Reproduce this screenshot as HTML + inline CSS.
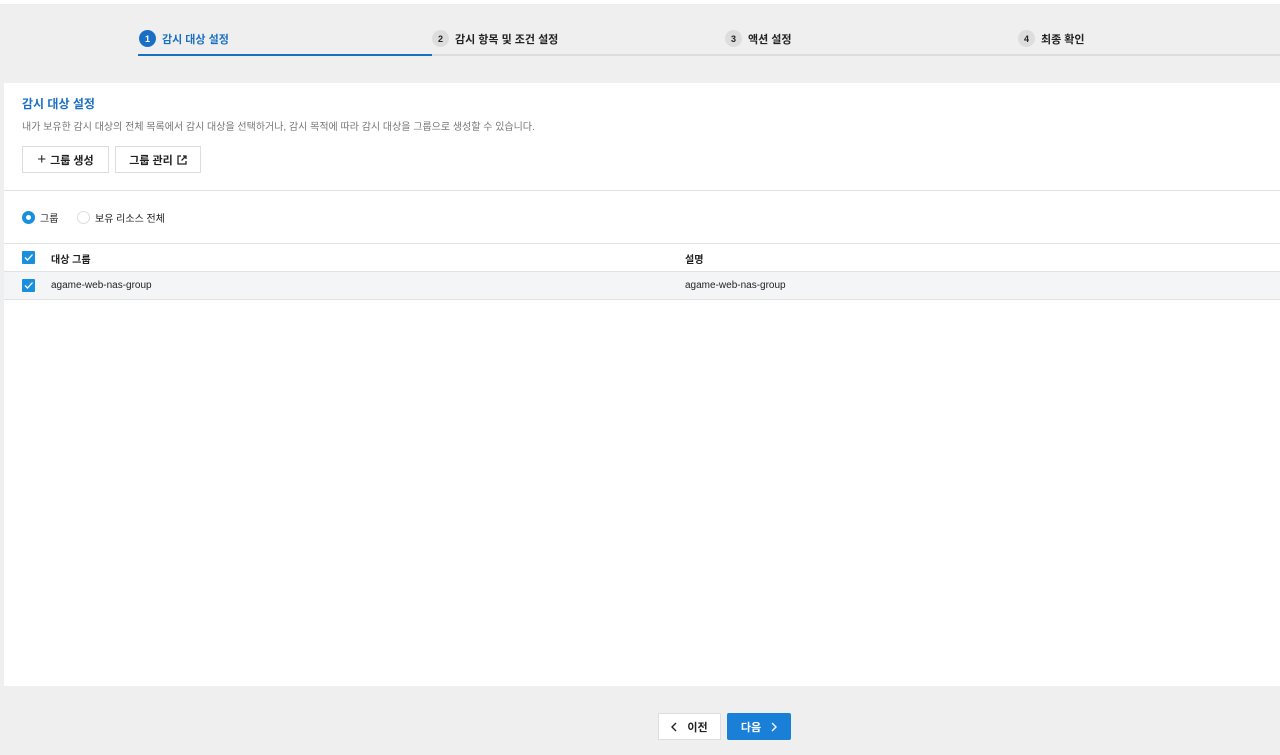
<!DOCTYPE html>
<html><head><meta charset="utf-8"><style>
*{margin:0;padding:0;box-sizing:border-box}
body{width:1280px;height:755px;background:#efefef;font-family:"Liberation Sans","Noto Sans CJK KR",sans-serif;position:relative;overflow:hidden;color:#222}
.top{position:absolute;left:0;top:0;width:1280px;height:4px;background:#fff}
.line{position:absolute;left:138px;top:54px;width:1142px;height:2px;background:#dcdcdc}
.blue{position:absolute;left:138px;top:54px;width:294px;height:2px;background:#1a6fc4}
.step{position:absolute;top:30px;font-size:11px;font-weight:bold;display:flex;align-items:center;gap:6px}
.num{width:17px;height:17px;border-radius:50%;background:#ddd;font-size:9px;display:flex;align-items:center;justify-content:center;color:#222}
.panel{position:absolute;left:4px;top:83px;width:1276px;height:603px;background:#fff}
h2{position:absolute;left:18px;top:12px;font-size:12px;color:#1a6fc4;font-weight:bold}
.desc{position:absolute;left:18px;top:35px;font-size:10px;color:#777}
.btn{position:absolute;top:63px;height:27px;border:1px solid #ddd;background:#fff;font-size:11px;font-weight:bold;display:flex;align-items:center;justify-content:center}
.hr{position:absolute;left:0;width:1276px;height:1px;background:#e2e2e2}
.radio{position:absolute;top:127px;font-size:10px;display:flex;align-items:center;gap:5px}
.cb{position:absolute;left:18px;width:13px;height:13px;background:#1a8fdd;border-radius:1px}
.row{position:absolute;left:0;width:1276px;font-size:10px}
</style></head><body>
<div class="top"></div>
<div class="line"></div><div class="blue"></div>
<div class="step" style="left:139px;color:#1a6fc4"><span class="num" style="background:#1a6fc4;color:#fff">1</span>감시 대상 설정</div>
<div class="step" style="left:432px"><span class="num">2</span>감시 항목 및 조건 설정</div>
<div class="step" style="left:725px"><span class="num">3</span>액션 설정</div>
<div class="step" style="left:1018px"><span class="num">4</span>최종 확인</div>
<div class="panel">
<h2>감시 대상 설정</h2>
<div class="desc">내가 보유한 감시 대상의 전체 목록에서 감시 대상을 선택하거나, 감시 목적에 따라 감시 대상을 그룹으로 생성할 수 있습니다.</div>
<div class="btn" style="left:18px;width:87px"><span style="font-size:15px;font-weight:normal;margin-right:4px">+</span>그룹 생성</div>
<div class="btn" style="left:111px;width:86px">그룹 관리 <svg width="10" height="10" viewBox="0 0 10 10" style="margin-left:4px"><path d="M4 1H1v8h8V6M6 1h3v3M9 1L4.5 5.5" fill="none" stroke="#222" stroke-width="1.3"/></svg></div>
<div class="hr" style="top:107px"></div>
<div class="radio" style="left:18px"><span style="width:13px;height:13px;border-radius:50%;border:4px solid #1a8fdd;display:inline-block"></span>그룹</div>
<div class="radio" style="left:73px"><span style="width:13px;height:13px;border-radius:50%;border:1px solid #ddd;display:inline-block"></span>보유 리소스 전체</div>
<div class="hr" style="top:160px"></div>
<div class="row" style="top:161px;height:27px;font-weight:bold"><div class="cb" style="top:7px"><svg width="13" height="13"><path d="M3 6.5l2.5 2.5 5-5.5" fill="none" stroke="#fff" stroke-width="1.3"/></svg></div><span style="position:absolute;left:47px;top:7px">대상 그룹</span><span style="position:absolute;left:681px;top:7px">설명</span></div>
<div class="hr" style="top:188px"></div>
<div class="row" style="top:189px;height:27px;background:#f4f5f7"><div class="cb" style="top:7px"><svg width="13" height="13"><path d="M3 6.5l2.5 2.5 5-5.5" fill="none" stroke="#fff" stroke-width="1.3"/></svg></div><span style="position:absolute;left:47px;top:8px">agame-web-nas-group</span><span style="position:absolute;left:681px;top:8px">agame-web-nas-group</span></div>
<div class="hr" style="top:216px"></div>
</div>
<div style="position:absolute;left:658px;top:713px;width:63px;height:27px;background:#fff;border:1px solid #ddd;font-size:11px;font-weight:bold;display:flex;align-items:center;justify-content:center;gap:10px"><svg width="6" height="10" viewBox="0 0 6 10"><path d="M5 1L1 5l4 4" fill="none" stroke="#222" stroke-width="1.4"/></svg>이전</div>
<div style="position:absolute;left:727px;top:713px;width:64px;height:27px;background:#1a7fd6;border-radius:2px;color:#fff;font-size:11px;font-weight:bold;display:flex;align-items:center;justify-content:center;gap:10px">다음<svg width="6" height="10" viewBox="0 0 6 10"><path d="M1 1l4 4-4 4" fill="none" stroke="#fff" stroke-width="1.4"/></svg></div>
</body></html>
